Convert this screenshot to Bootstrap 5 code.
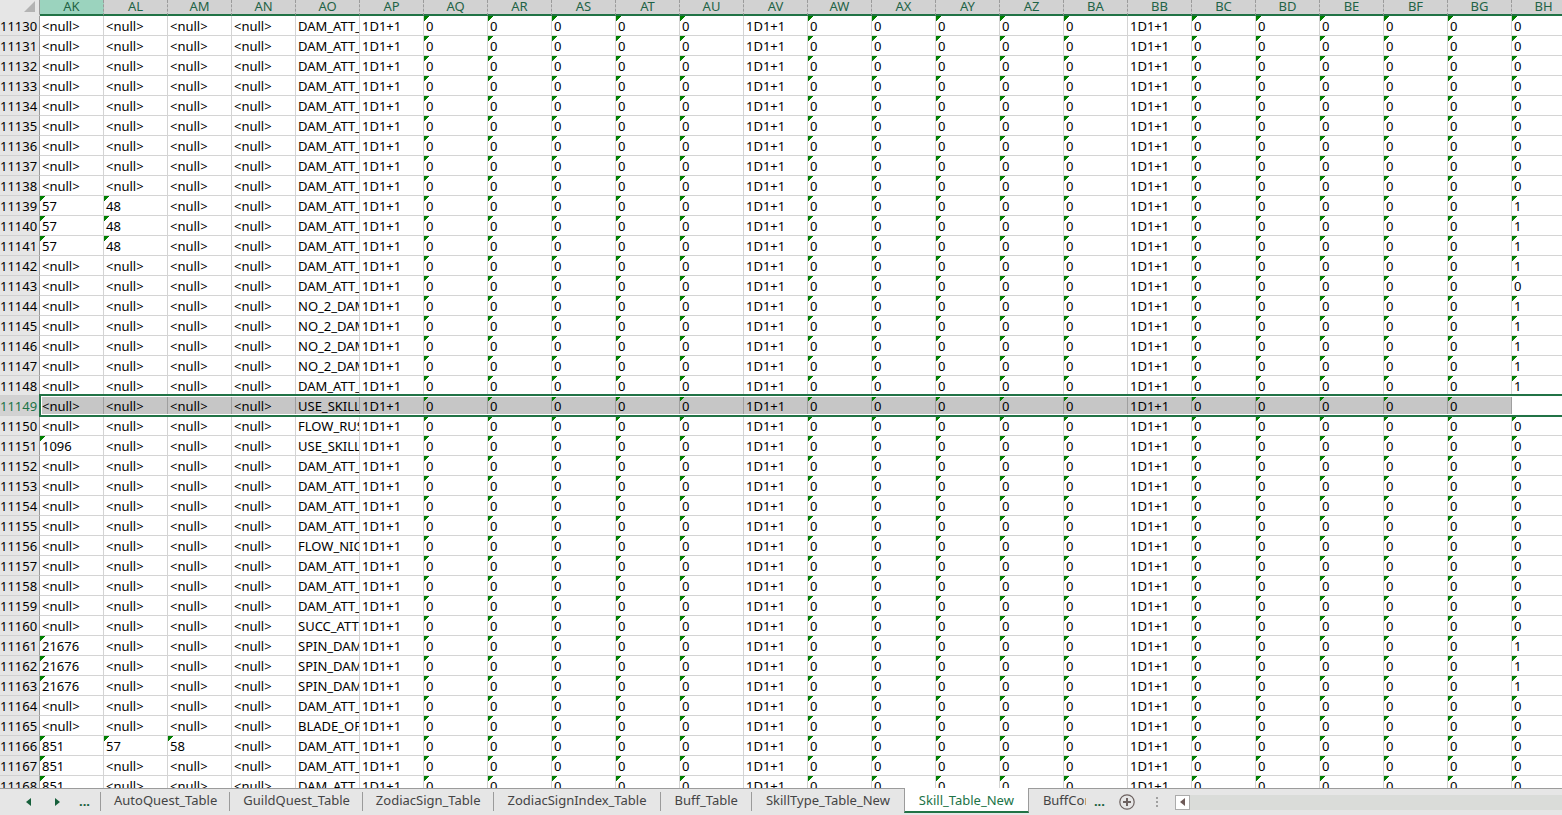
<!DOCTYPE html>
<html lang="en">
<head>
<meta charset="utf-8">
<meta name="viewport" content="width=device-width, initial-scale=1">
<title>Skill_Table_New</title>
<link rel="stylesheet" href="https://cdn.jsdelivr.net/npm/bootstrap@5.3.0/dist/css/bootstrap.min.css">
<style>
  :root { --xl-green: #217346; --xl-line: #d4d4d4; --xl-bar: #e6e6e6; --xl-edge: #9b9b9b; }
  body { font-family: "Noto Sans", "Noto Sans CJK TC", sans-serif; font-size: 13px; line-height: 17px; color: #000; }
  main { min-height: 0; }
  .sheet { table-layout: fixed; border-collapse: separate; border-spacing: 0; width: 1576px; }
  .sheet .col-head { width: 40px; }
  .sheet th { font-weight: 400; }
  .sheet thead th { height: 16px; line-height: 12px; padding: 0; vertical-align: top; text-align: center; color: #1f6346; background: #d2d2d2; border-right: 1px dashed #9b9b9b; border-bottom: 2px solid var(--xl-green); }
  .sheet thead th.current { background: #9bd3be; }
  .sheet thead th.corner { background: var(--xl-bar); border-right: 1px solid var(--xl-edge); border-bottom-color: var(--xl-bar); position: relative; }
  .corner svg { position: absolute; right: 3px; top: 1px; }
  .sheet tbody th { height: 20px; padding: 2px 2px 0 0; text-align: right; background: var(--xl-bar); border-right: 1px solid var(--xl-edge); border-bottom: 1px solid #d0d0d0; }
  .sheet td { height: 20px; padding: 2px 0 0 2px; white-space: nowrap; overflow: hidden; border-right: 1px solid var(--xl-line); border-bottom: 1px solid var(--xl-line); }
  .sheet td.flag { background: linear-gradient(135deg, #008000 0 4px, transparent 4px) no-repeat 0 0 / 6px 6px; }
  .sheet tr.picked { position: relative; }
  .sheet tr.picked th { background: #d2d2d2; color: var(--xl-green); }
  .sheet tr.picked td { background-color: #c6c6c6; border-right-color: #9f9f9f; }
  .sheet tr.picked td:last-child { background-color: #fff; }
  .outline-box { position: absolute; left: 39px; right: -4px; top: -2px; bottom: -1px; border: 2px solid var(--xl-green); box-shadow: inset 0 0 0 1px #fff; pointer-events: none; }
  .tabbar { height: 27px; background: var(--xl-bar); border-top: 1px solid var(--xl-edge); color: #444; }
  .tabbar button { border: 0; background: none; padding: 0; color: inherit; line-height: 18px; white-space: nowrap; }
  .arrows { width: 100px; padding-left: 25px; color: #17603b; }
  .arrows .next-sheets { margin-left: 22px; }
  .tabs button { height: 22px; padding: 0 13px; border: 0; }
  .tabs button:nth-child(n+5) { padding: 0 14px; }
  .tabs button:not(.active, .cut) { background: linear-gradient(var(--xl-edge), var(--xl-edge)) no-repeat 100% 3px / 1px 19px; }
  .tabs button.before { background: none; }
  .tabs button.active { height: 25px; margin-top: -1px; padding: 2px 14px 1px; background: #fff; color: var(--xl-green); border: solid var(--xl-edge); border-width: 0 1px; border-bottom: 2px solid var(--xl-green); }
  .tabs button.cut { width: 57px; padding: 0 0 0 14px; overflow: hidden; text-align: left; }
  .lead-rule { width: 1px; height: 19px; margin-top: 3px; background: var(--xl-edge); }
  .tabbar .dots { color: #17603b; font-weight: 700; padding-bottom: 2px; }
  .tools { gap: 14px; }
  .tabbar .scroll-left { width: 15px; height: 15px; border: 1px solid #ababab; background: #fff; }
  .track { height: 15px; background: #dadcd9; }
</style>
</head>
<body class="vh-100 d-flex flex-column overflow-hidden bg-white">
<main class="flex-grow-1 overflow-hidden">
  <table class="sheet">
    <thead><tr id="heads"><th class="corner col-head" aria-label="Select all"><svg width="12" height="12" viewBox="0 0 12 12"><path d="M11 0V11H0Z" fill="#b3b3b3"/></svg></th></tr></thead>
    <tbody id="rows"></tbody>
  </table>
</main>
<footer class="tabbar d-flex flex-shrink-0 align-items-start">
  <div class="arrows d-flex flex-shrink-0 align-items-center h-100">
    <button aria-label="Previous sheets" class="d-flex"><svg width="8" height="8" viewBox="0 0 8 8"><path d="M6 0V8L1 4Z" fill="currentColor"/></svg></button>
    <button aria-label="Next sheets" class="next-sheets d-flex"><svg width="8" height="8" viewBox="0 0 8 8"><path d="M0 0V8L5 4Z" fill="currentColor"/></svg></button>
    <button class="dots ms-3" aria-label="More sheets">...</button>
  </div>
  <nav class="tabs d-flex flex-shrink-0 align-items-start" aria-label="Sheets">
    <span class="lead-rule"></span>
    <button>AutoQuest_Table</button><button>GuildQuest_Table</button><button>ZodiacSign_Table</button><button>ZodiacSignIndex_Table</button><button>Buff_Table</button><button class="before">SkillType_Table_New</button><button class="active">Skill_Table_New</button><button class="cut">BuffCondition</button>
  </nav>
  <div class="tools d-flex flex-grow-1 align-items-center h-100">
    <button class="dots ms-2" aria-label="More sheets">...</button>
    <button class="d-flex" aria-label="New sheet"><svg width="16" height="16" viewBox="0 0 16 16" fill="none" stroke="#6d6260"><circle cx="8" cy="8" r="7.2" stroke-width="1.2"/><path d="M8 4V12M4 8H12" stroke-width="2"/></svg></button>
    <svg class="ms-1 flex-shrink-0" width="8" height="10" viewBox="0 0 8 10" fill="#a0a0a0"><path d="M3 0h2v2H3zM3 4h2v2H3zM3 8h2v2H3z"/></svg>
    <div class="d-flex flex-grow-1">
      <button class="scroll-left d-flex align-items-center justify-content-center flex-shrink-0" aria-label="Scroll left"><svg width="5" height="8" viewBox="0 0 5 8"><path d="M5 0V8L0 4Z" fill="#6d5a58"/></svg></button>
      <div class="track flex-grow-1"></div>
    </div>
  </div>
</footer>
<script src="https://cdn.jsdelivr.net/npm/bootstrap@5.3.0/dist/js/bootstrap.bundle.min.js"></script>
<script>
  const columns = "AK AL AM AN AO AP AQ AR AS AT AU AV AW AX AY AZ BA BB BC BD BE BF BG BH".split(" ");
  const first = 11130, last = 11168, selected = 11149;
  const leading = {
    11139: ["57", "48"], 11140: ["57", "48"], 11141: ["57", "48"], 11151: ["1096"],
    11161: ["21676"], 11162: ["21676"], 11163: ["21676"],
    11166: ["851", "57", "58"], 11167: ["851"], 11168: ["851"]
  };
  const effects = {
    11144: "NO_2_DAM", 11145: "NO_2_DAM", 11146: "NO_2_DAM", 11147: "NO_2_DAM",
    11149: "USE_SKILL", 11150: "FLOW_RUSH", 11151: "USE_SKILL", 11156: "FLOW_NIGHT",
    11160: "SUCC_ATT", 11161: "SPIN_DAM", 11162: "SPIN_DAM", 11163: "SPIN_DAM", 11165: "BLADE_OF"
  };
  const ones = [11139, 11140, 11141, 11142, 11144, 11145, 11146, 11147, 11148, 11161, 11162, 11163];

  const heads = document.getElementById("heads");
  columns.forEach(name => {
    const th = document.createElement("th");
    th.scope = "col";
    th.textContent = name;
    if (name === "AK") th.className = "current";
    heads.append(th);
  });

  function valueAt(row, name, i) {
    if (i < 4) return (leading[row] || [])[i] || "<null>";
    if (name === "AO") return effects[row] || "DAM_ATT_";
    if (["AP", "AV", "BB"].includes(name)) return "1D1+1";
    if (name === "BH") return row === selected ? "" : ones.includes(row) ? "1" : "0";
    return "0";
  }

  const body = document.getElementById("rows");
  for (let row = first; row <= last; row++) {
    const tr = body.insertRow();
    const th = document.createElement("th");
    th.scope = "row";
    th.textContent = row;
    tr.append(th);
    columns.forEach((name, i) => {
      const td = tr.insertCell();
      td.textContent = valueAt(row, name, i);
      if (/^\d+$/.test(td.textContent)) td.className = "flag";
    });
    if (row === selected) {
      tr.className = "picked";
      const box = document.createElement("span");
      box.className = "outline-box";
      th.append(box);
    }
  }
</script>
</body>
</html>
